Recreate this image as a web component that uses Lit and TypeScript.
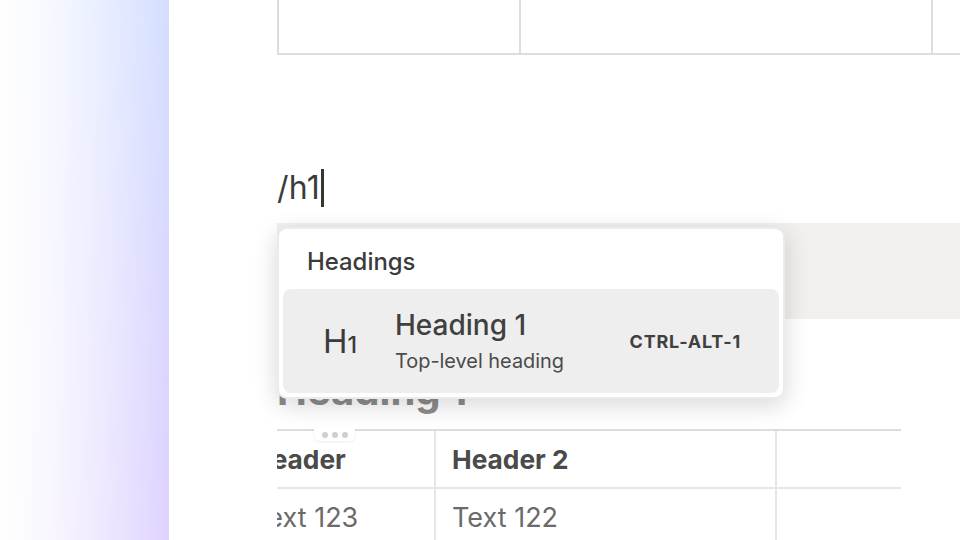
import { LitElement, html, css } from "lit";
import { customElement } from "lit/decorators.js";

@customElement("app-root")
export class AppRoot extends LitElement {
  static styles = css`
    :host {
      display: block;
      width: 960px;
      height: 540px;
      overflow: hidden;
      background: #fff;
      font-family: Inter, "Liberation Sans", sans-serif;
      color: #37352f;
    }
    .page {
      display: flex;
      height: 540px;
    }
    .sidebar {
      width: 169px;
      flex-shrink: 0;
      background: linear-gradient(
          to right,
          #fff,
          rgba(255, 255, 255, 0.8) 30%,
          rgba(255, 255, 255, 0.5) 60%,
          rgba(255, 255, 255, 0.15) 89%,
          rgba(255, 255, 255, 0)
        ),
        linear-gradient(to bottom, #d3deff, #dfd2ff);
    }
    .editor {
      position: relative;
      flex: 1;
      padding-left: 108px;
      overflow: hidden;
    }
    .top-table {
      display: grid;
      grid-template-columns: 242px 412px 60px;
      height: 55px;
      border-bottom: 2px solid #ddd;
      box-sizing: border-box;
    }
    .top-table div {
      border-left: 2px solid #ddd;
    }
    .line {
      margin-top: 110px;
      height: 46px;
      display: flex;
      align-items: center;
      font-size: 32px;
      letter-spacing: 0.3px;
      line-height: 46px;
      color: #3b3b3b;
    }
    .caret {
      width: 3px;
      height: 38px;
      margin-left: 1px;
      background: #37352f;
    }
    .band {
      margin-top: 12px;
      height: 96px;
      background: #f1f0ed;
    }
    .heading {
      margin-top: 49px;
      font-size: 40px;
      font-weight: 700;
      line-height: 46px;
      color: #8c8c8c;
    }
    .table-wrap {
      position: relative;
      margin-top: 15px;
      width: 624px;
    }
    .clip {
      overflow: hidden;
    }
    table {
      border-collapse: collapse;
      table-layout: fixed;
      margin-left: -43px;
      width: 667px;
      font-size: 27px;
      color: #6a6a6a;
    }
    th,
    td {
      text-align: left;
      padding: 0 16px;
      height: 58px;
      box-sizing: border-box;
      border-left: 2px solid #e6e6e6;
      border-top: 2px solid #e6e6e6;
    }
    th {
      font-size: 26.3px;
      font-weight: 700;
      color: #4a4a4a;
      border-top-color: #ddd;
    }
    .handle {
      position: absolute;
      left: 37px;
      top: -1px;
      width: 41px;
      height: 13px;
      background: #fff;
      border-radius: 0 0 6px 6px;
      box-shadow: 0 1px 3px rgba(0, 0, 0, 0.08);
      display: flex;
      align-items: center;
      justify-content: center;
      gap: 4px;
    }
    .handle i {
      width: 6px;
      height: 6px;
      border-radius: 50%;
      background: #cfcfcf;
    }
    .menu {
      position: absolute;
      left: 108px;
      top: 227px;
      width: 508px;
      height: 172px;
      box-sizing: border-box;
      background: #fff;
      border: 2px solid #ebebeb;
      border-radius: 10px;
      padding: 0 4px 4px 4px;
      box-shadow: 0 6px 24px rgba(0, 0, 0, 0.16);
      display: flex;
      flex-direction: column;
    }
    .group {
      height: 60px;
      padding: 5px 0 0 24px;
      box-sizing: border-box;
      display: flex;
      align-items: center;
      font-size: 23.9px;
      font-weight: 500;
      color: #3b3b3b;
    }
    .item {
      flex: 1;
      display: flex;
      align-items: center;
      background: #eee;
      border-radius: 8px;
    }
    .glyph {
      width: 112px;
      padding-left: 40px;
      box-sizing: border-box;
      font-size: 33px;
      color: #3b3b3b;
    }
    .glyph small {
      font-size: 23px;
      font-weight: 500;
    }
    .text {
      flex: 1;
      padding-top: 4px;
    }
    .title {
      font-size: 28px;
      font-weight: 500;
      line-height: 36px;
      color: #404040;
    }
    .sub {
      font-size: 19.9px;
      line-height: 36px;
      color: #4a4a4a;
    }
    .keys {
      font-size: 18px;
      font-weight: 700;
      letter-spacing: 0.8px;
      color: #404040;
      padding-right: 38px;
    }
  `;

  render() {
    return html`
      <div class="page">
        <div class="sidebar"></div>
        <div class="editor">
          <div class="top-table"><div></div><div></div><div></div></div>
          <div class="line">/h1<span class="caret"></span></div>
          <div class="band"></div>
          <div class="heading">Heading 1</div>
          <div class="table-wrap">
            <div class="clip">
              <table>
                <colgroup>
                  <col style="width: 200px" />
                  <col style="width: 341px" />
                  <col style="width: 126px" />
                </colgroup>
                <tr><th>Header</th><th>Header 2</th><th></th></tr>
                <tr><td>Text 123</td><td>Text 122</td><td></td></tr>
              </table>
            </div>
            <div class="handle"><i></i><i></i><i></i></div>
          </div>
          <div class="menu">
            <div class="group">Headings</div>
            <div class="item">
              <div class="glyph">H<small>1</small></div>
              <div class="text">
                <div class="title">Heading 1</div>
                <div class="sub">Top-level heading</div>
              </div>
              <div class="keys">CTRL-ALT-1</div>
            </div>
          </div>
        </div>
      </div>
    `;
  }
}
